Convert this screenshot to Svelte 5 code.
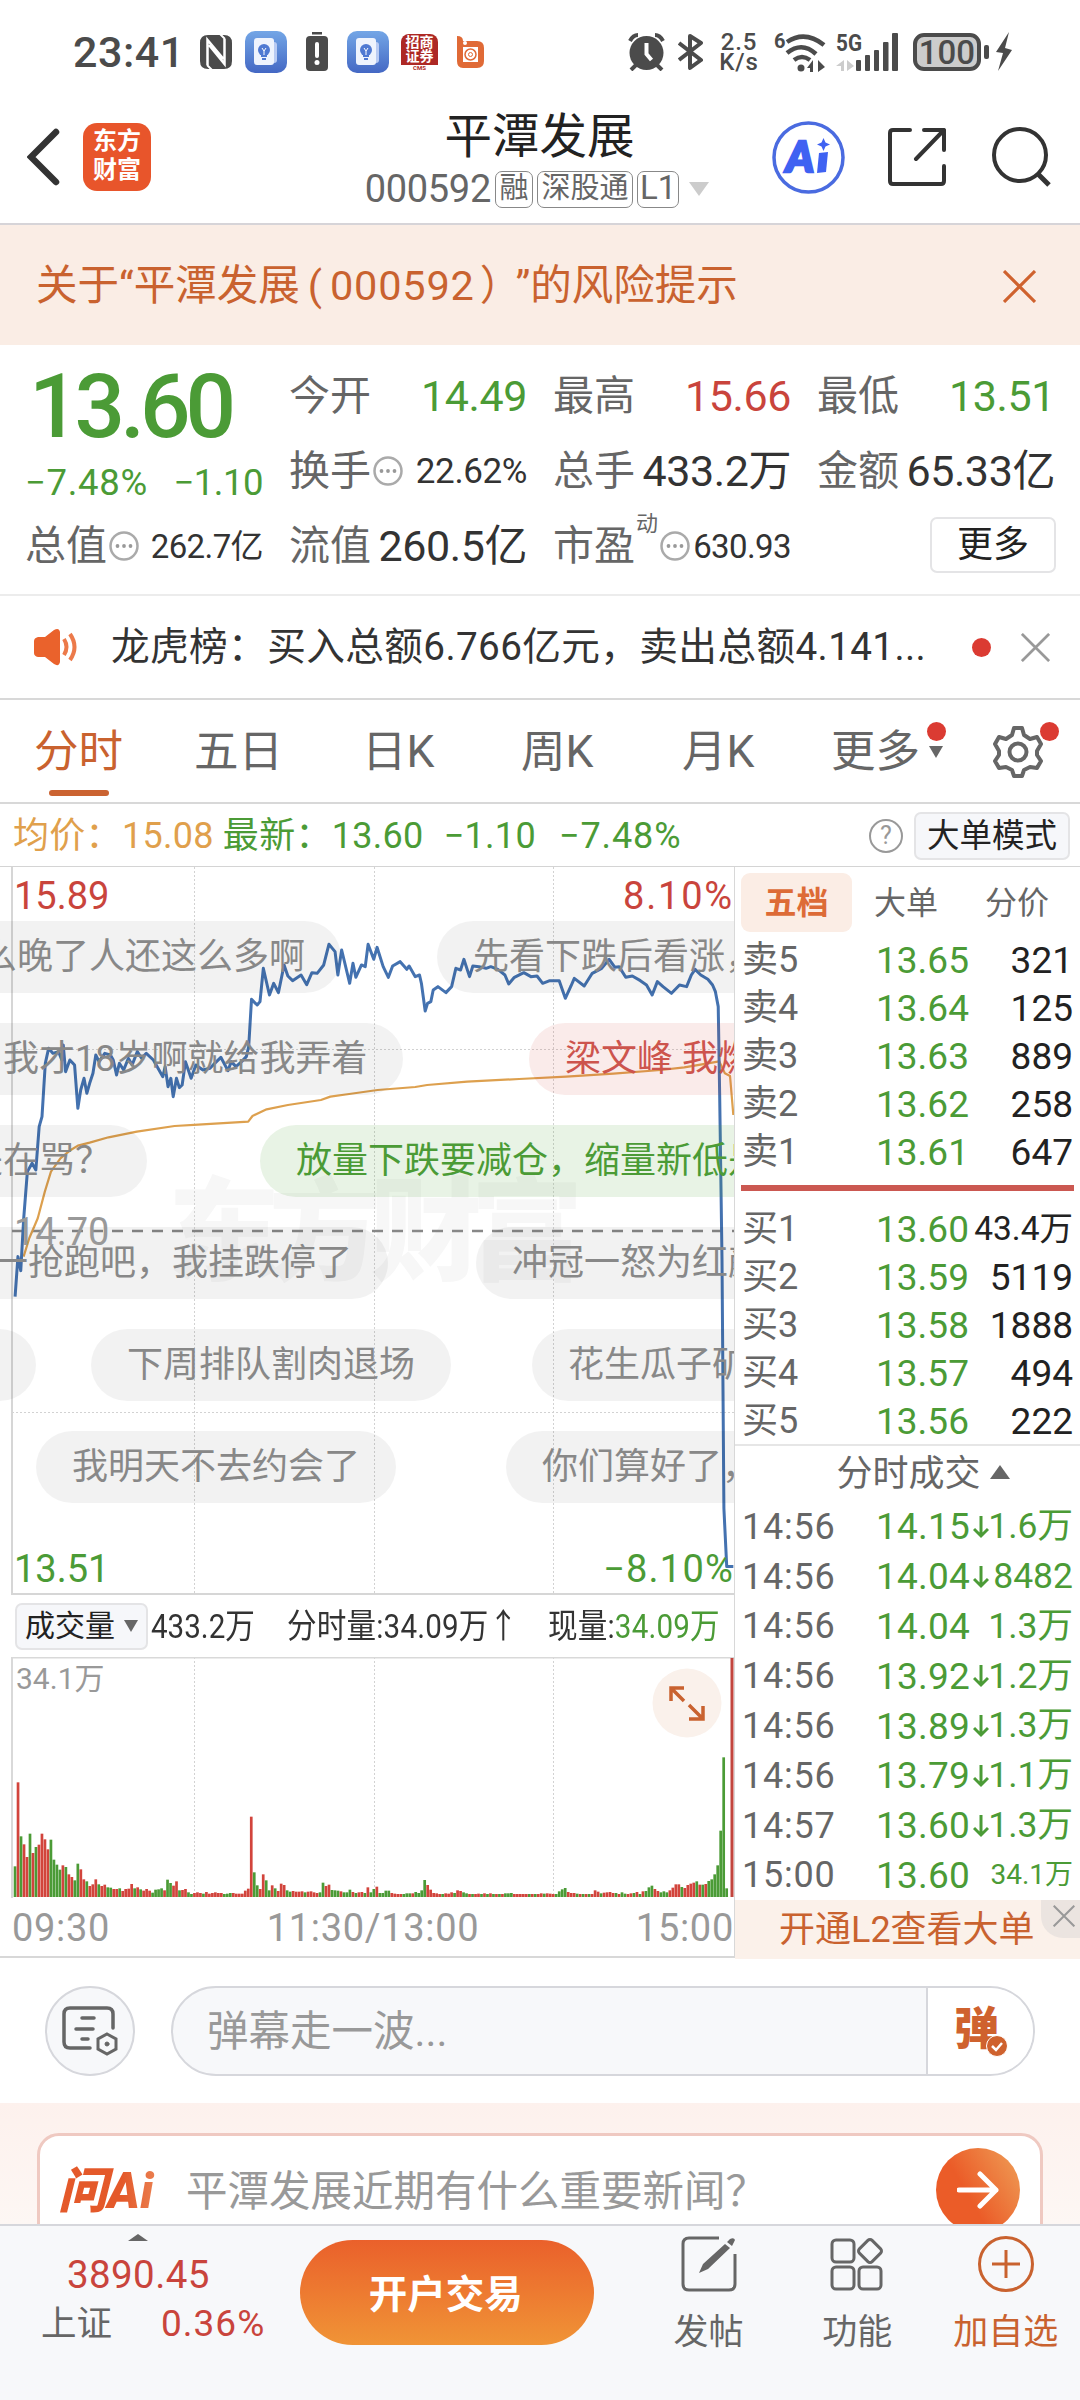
<script>
	const stats = [
		{ label: '今开', value: '14.49', tone: 'down' },
		{ label: '最高', value: '15.66', tone: 'up' },
		{ label: '最低', value: '13.51', tone: 'down' },
		{ label: '换手', value: '22.62%', info: true },
		{ label: '总手', value: '433.2万' },
		{ label: '金额', value: '65.33亿' },
	];
	const valuations = [
		{ label: '总值', value: '262.7亿', info: true },
		{ label: '流值', value: '260.5亿' },
		{ label: '市盈', sup: '动', value: '630.93', info: true },
	];

	const asks = [['卖5', '13.65', '321'], ['卖4', '13.64', '125'], ['卖3', '13.63', '889'], ['卖2', '13.62', '258'], ['卖1', '13.61', '647']];
	const bids = [['买1', '13.60', '43.4万'], ['买2', '13.59', '5119'], ['买3', '13.58', '1888'], ['买4', '13.57', '494'], ['买5', '13.56', '222']];
	const trades = [
		['14:56', '14.15', true, '1.6万'],
		['14:56', '14.04', true, '8482'],
		['14:56', '14.04', false, '1.3万'],
		['14:56', '13.92', true, '1.2万'],
		['14:56', '13.89', true, '1.3万'],
		['14:56', '13.79', true, '1.1万'],
		['14:57', '13.60', true, '1.3万'],
		['15:00', '13.60', false, '34.1万'],
	];

	// floating comments, x is where the bubble starts in the chart
	const bullets = [
		{ x: -55, row: 0, text: '么晚了人还这么多啊' },
		{ x: 437, row: 0, text: '先看下跌后看涨，' },
		{ x: -33, row: 1, text: '我才18岁啊就给我弄着' },
		{ x: 529, row: 1, text: '梁文峰 我燃', tone: 'red' },
		{ x: -69, row: 2, text: '是在骂？' },
		{ x: 260, row: 2, text: '放量下跌要减仓，缩量新低是', tone: 'green' },
		{ x: -44, row: 3, text: '一抢跑吧，我挂跌停了' },
		{ x: 476, row: 3, text: '冲冠一怒为红颜' },
		{ x: -72, row: 4, text: '了' },
		{ x: 91, row: 4, text: '下周排队割肉退场' },
		{ x: 532, row: 4, text: '花生瓜子矿' },
		{ x: 36, row: 5, text: '我明天不去约会了' },
		{ x: 506, row: 5, text: '你们算好了，' },
	];

	const pricePoints = '32,1310 38,1190 44,1232 50,1080 58,935 68,910 76,930 83,800 89,770 96,610 103,565 112,580 124,575 131,600 134,555 139,635 148,600 158,615 165,745 171,690 178,655 184,700 190,670 197,640 203,585 210,605 222,580 234,585 240,600 247,645 253,610 262,630 272,595 280,615 291,575 300,595 310,580 325,600 345,650 350,620 356,680 362,655 367,710 374,655 380,683 386,675 393,605 405,655 415,615 430,630 445,625 455,610 468,592 483,632 490,605 500,620 512,605 522,590 527,560 533,418 545,435 551,425 558,325 571,405 580,370 590,398 602,315 610,348 620,362 638,345 650,374 661,338 672,340 686,315 697,253 710,275 716,345 724,270 741,370 748,310 754,352 766,315 774,320 780,253 792,298 799,262 812,320 823,352 832,318 848,305 862,328 867,318 880,350 889,345 893,370 901,453 906,430 913,425 918,390 928,380 945,398 957,380 966,325 976,330 983,298 995,350 1002,318 1015,320 1030,325 1040,320 1055,328 1070,345 1078,372 1090,352 1110,338 1125,350 1138,348 1150,370 1165,362 1185,362 1198,415 1210,378 1217,355 1238,378 1255,340 1275,325 1291,298 1303,322 1312,320 1326,352 1340,348 1357,362 1370,375 1382,405 1393,365 1405,380 1423,400 1440,375 1455,380 1465,345 1473,328 1485,345 1500,358 1510,375 1516,395 1522,440 1525,700 1530,1200 1534,1945 1540,2120 1554,2120';
	const averagePoints = '50,1190 62,1135 80,1075 95,995 108,935 128,895 150,870 165,857 190,848 230,832 290,815 370,798 420,794 526,785 535,768 565,748 610,735 680,720 700,710 740,702 800,690 880,681 905,675 990,665 1100,657 1200,650 1300,641 1400,630 1450,622 1500,610 1524,604 1536,640 1547,648 1554,765';

	// one entry per minute, negative means the price fell
	const volumes = [
		-92, 344, -182, 158, 120, -190, 132, -150, 157, 190, 173, 143, -172, -112, -97, -82, 95, -90, 68, 60,
		-50, -100, 83, 53, -47, 33, 38, 53, -38, 33, 37, -29, -28, 24, 24, -26, 18, 24, 25, 39,
		-26, 29, -23, 19, 24, 19, -13, -22, -23, -26, 20, -52, -42, 34, 47, -20, 21, 24, -14, -9,
		12, 14, 12, -10, 15, 10, 12, 14, 12, 12, -9, -10, -12, 12, 10, 10, 10, 19, 25, 241,
		-74, -35, 24, 68, -50, -20, 35, -26, 18, 40, 36, -20, -16, 18, 16, 16, 17, -14, 16, 17,
		14, 12, -14, -43, 33, 37, -21, -20, -19, 17, -14, -14, -22, 15, -12, 14, 15, -12, 29, -14,
		-24, 31, -12, -12, -19, -19, 12, 10, 9, 9, -9, -11, -11, 11, -15, -12, -20, -51, 36, 22,
		12, 11, 9, -9, 11, 10, 14, -12, 20, 18, -14, -11, 9, -9, 9, 10, -9, 11, -9, 11,
		-9, 9, -9, 9, -11, -11, -12, 9, 9, 9, 9, 9, -9, 9, -9, 9, 11, -10, 11, 10,
		9, -9, -17, -23, -27, 15, 12, 12, -10, 9, -9, 9, -9, 9, 20, 16, -11, 13, 14, 15,
		12, -12, 9, -14, -10, 9, 11, -12, 15, -9, 17, -18, -29, -34, 24, 18, -14, -17, -14, 20,
		28, 38, 38, -30, 27, 36, 40, 43, -47, 37, -37, 39, -48, -53, -68, -95, -199, -419, -26, 0,
	];
</script>

<svelte:head>
	<title>平潭发展</title>
</svelte:head>

{#snippet cross(size, color)}
	<svg width={size} height={size} viewBox="0 0 32 32" fill="none" stroke={color} stroke-width="3">
		<path d="M1 1 31 31M31 1 1 31" />
	</svg>
{/snippet}

{#snippet info()}
	<svg class="info" width="30" height="30" viewBox="0 0 30 30" fill="#999">
		<circle cx="15" cy="15" r="13.500" fill="none" stroke="#aaa" stroke-width="2.500" />
		<circle cx="8.500" cy="15" r="1.900" /><circle cx="15" cy="15" r="1.900" /><circle cx="21.500" cy="15" r="1.900" />
	</svg>
{/snippet}

{#snippet tipIcon()}
	<svg width="42" height="42" viewBox="0 0 42 42">
		<rect width="42" height="42" rx="10" fill="url(#tipFill)" />
		<rect x="26" y="11" width="6" height="21" rx="3" fill="#b9cbf3" />
		<rect x="9" y="7" width="20" height="27" rx="3" fill="#eef3fd" />
		<circle cx="19" cy="19" r="6" fill="#4f79d2" />
		<path d="M16 24h6v2h-6zM17 27h4v2h-4z" fill="#4f79d2" />
		<path d="m17 17 2 3 2-3M19 20v4" stroke="#fff" fill="none" />
	</svg>
{/snippet}

<div class="screen">
	<div class="status">
		<span class="clock">23:41</span>
		<div class="left-icons">
			<svg width="34" height="36" viewBox="0 0 34 36">
				<path d="M9 1h11v34H9q-8 0-8-8V9q0-8 8-8zM14 1h11q8 0 8 8v18q0 8-8 8H14z" fill="#4b4b4b" />
				<path d="M8.500 31V6l16 19M25.500 5v25L10 11" fill="none" stroke="#fff" stroke-width="2.500" />
				<path d="M21 0l5 5M8 31l5 5" stroke="#fff" stroke-width="2" />
			</svg>
			<svg class="defs" width="0" height="0">
				<linearGradient id="tipFill" x2="0" y2="1">
					<stop stop-color="#73a6e6" /><stop offset="1" stop-color="#4468c4" />
				</linearGradient>
			</svg>
			{@render tipIcon()}
			<svg class="alert" width="22" height="40" viewBox="0 0 22 40">
				<path d="M6 0h10v2.500H6z" fill="#4b4b4b" />
				<rect y="4" width="22" height="35" rx="4" fill="#4b4b4b" />
				<path d="M11 12v12" stroke="#fff" stroke-width="4" stroke-linecap="round" />
				<circle cx="11" cy="30.500" r="2.500" fill="#fff" />
			</svg>
			{@render tipIcon()}
			<div class="broker"><div>招商<br />证券</div><em>CMS</em></div>
			<svg width="27" height="32" viewBox="0 0 27 32">
				<path d="M0 0q6 0 6 5h14q7 0 7 7v13q0 7-7 7H6q-6 0-6-7z" fill="#e06a36" />
				<rect x="6" y="11" width="15" height="15" fill="#fff" />
				<circle cx="8" cy="7" r="2" fill="#fff" />
				<circle cx="13.500" cy="18.500" r="5.500" fill="none" stroke="#e06a36" stroke-width="1.500" />
				<circle cx="13.500" cy="18.500" r="2" fill="none" stroke="#e06a36" />
			</svg>
		</div>
		<div class="right-icons">
			<svg width="37" height="38" viewBox="0 0 37 38" fill="none" stroke="#4b4b4b">
				<circle cx="18.500" cy="20" r="17" fill="#4b4b4b" stroke="none" />
				<path d="M2 8q3-6 8-6M35 8q-3-6-8-6" stroke-width="4" />
				<path d="M8 32 3 37M29 32l5 5" stroke-width="4" />
				<path d="M18.500 10v11l5 6" stroke="#fff" stroke-width="4" />
			</svg>
			<svg class="bt" width="26" height="38" viewBox="0 0 26 38" fill="none" stroke="#4b4b4b" stroke-width="4" stroke-linejoin="round">
				<path d="M1 10 23 27 12 35V3l11 7L1 27" />
			</svg>
			<div class="rate">2.5<br />K/s</div>
			<svg class="wifi" width="52" height="40" viewBox="0 0 52 40" fill="none" stroke="#4b4b4b" stroke-width="4.500">
				<text x="0" y="16" font-size="20" font-weight="700" fill="#4b4b4b" stroke="none">6</text>
				<path d="M13 10q18-12 37 3M13 21q15-12 29 1M20 28q8-6 16 0" />
				<circle cx="27" cy="36" r="3.500" fill="#4b4b4b" stroke="none" />
				<path d="M39 28v12h-3v-4h-3zM44 28v12l7-5z" fill="#4b4b4b" stroke="none" />
			</svg>
			<svg class="cell" width="64" height="40" viewBox="0 0 64 40" fill="#4b4b4b">
				<text x="0" y="19" font-size="23" font-weight="700" textLength="26" lengthAdjust="spacingAndGlyphs">5G</text>
				<path d="M8 28v11H5v-5H0zM11 28v11l7-5z" fill="#ccc" />
				<rect x="20" y="28" width="5" height="11" rx="1" /><rect x="29" y="23" width="5" height="16" rx="1" />
				<rect x="38" y="18" width="5" height="21" rx="1" /><rect x="47" y="10" width="5.500" height="29" rx="1" />
				<rect x="56" y="1" width="6" height="38" rx="1" />
			</svg>
			<div class="battery">100</div>
			<i class="nub"></i>
			<svg width="18" height="40" viewBox="0 0 18 40"><path d="M14 0 1 20l7 1L3 39 17 18l-7-2z" fill="#4b4b4b" /></svg>
		</div>
	</div>

	<header>
		<svg class="back" width="34" height="58" viewBox="0 0 34 58" fill="none" stroke="#333" stroke-width="6.500" stroke-linecap="round">
			<path d="M29 4 4 29l25 25" />
		</svg>
		<div class="logo">东方<br />财富</div>
		<div class="title">
			<h1>平潭发展</h1>
			<div class="code">
				<span>000592</span><b>融</b><b>深股通</b><b>L1</b><i></i>
			</div>
		</div>
		<svg width="73" height="73" viewBox="0 0 73 73">
			<circle cx="36.500" cy="36.500" r="34.500" fill="none" stroke="#4a6be0" stroke-width="3.500" />
			<text class="ai" x="14" y="51" font-size="42" textLength="28" lengthAdjust="spacingAndGlyphs">A</text>
			<path d="m47 32 9-1-2 20-9 1z" fill="#3f62f2" />
			<path d="m51.500 17 2 4.500 4.500 2-4.500 2-2 4.500-2-4.500-4.500-2 4.500-2z" fill="#3f62f2" />
		</svg>
		<svg class="share" width="58" height="58" viewBox="0 0 58 58" fill="none" stroke="#333" stroke-width="4" stroke-linecap="round" stroke-linejoin="round">
			<path d="M22 2H5Q2 2 2 5v48q0 3 3 3h48q3 0 3-3V38M36 2h20v20M56 2 28 31" />
		</svg>
		<svg class="search" width="60" height="60" viewBox="0 0 60 60" fill="none" stroke="#333" stroke-width="4">
			<circle cx="28" cy="28" r="26" /><path d="m46 47 11 11" stroke-width="5" />
		</svg>
	</header>

	<div class="notice">
		<span>关于“平潭发展<b class="open">(</b><b class="num">000592</b><b class="close">）</b>”的风险提示</span>
		{@render cross(33, '#cf622e')}
	</div>

	<section class="quote">
		<div class="top">
			<div class="last">
				<strong>13.60</strong>
				<p><span>−7.48%</span><span>−1.10</span></p>
			</div>
			<div class="stats">
				{#each stats as s}
					<div class="stat {s.tone}">
						<label>{s.label}</label>
						{#if s.info}{@render info()}{/if}
						<span class:small={s.info}>{s.value}</span>
					</div>
				{/each}
			</div>
		</div>
		<div class="bottom">
			{#each valuations as s}
				<div class="stat">
					<label>{s.label}</label>
					{#if s.sup}<sup>{s.sup}</sup>{/if}
					{#if s.info}{@render info()}{/if}
					<span class:small={s.info}>{s.value}</span>
				</div>
			{/each}
			<button>更多</button>
		</div>
	</section>

	<div class="ticker">
		<svg width="45" height="38" viewBox="0 0 45 38">
			<path d="M0 13q0-3 4-4h7L20 2q5-3 6 2v30q-1 5-6 2l-9-7H4q-4-1-4-4z" fill="#ea622c" />
			<path d="M30 11q5 8 0 16M36 6q9 13 0 26" fill="none" stroke="#ec7a4a" stroke-width="4" />
		</svg>
		<span>龙虎榜：买入总额6.766亿元，卖出总额4.141...</span>
		<i class="dot"></i>
		{@render cross(29, '#999')}
	</div>

	<nav>
		<span class="active">分时</span>
		<span>五日</span>
		<span>日K</span>
		<span>周K</span>
		<span>月K</span>
		<span class="more">更多<i class="caret"></i><i class="dot"></i></span>
		<div class="gear">
			<svg width="52" height="52" viewBox="0 0 52 52" fill="none" stroke="#666" stroke-width="4" stroke-linejoin="round">
				<path d="M22 2h8l2 7 6 4 7-2 4 7-4 7v4l4 6-4 7-7-1-6 3-2 6h-8l-2-6-6-3-7 1-4-7 4-6v-4l-4-7 4-7 7 2 6-4z" />
				<circle cx="26" cy="26" r="8.500" />
			</svg>
			<i class="dot"></i>
		</div>
	</nav>

	<div class="summary">
		<span class="avg">均价：15.08</span>
		<span class="now">最新：13.60</span>
		<span class="now">−1.10</span>
		<span class="now">−7.48%</span>
		<i class="help">?</i>
		<button>大单模式</button>
	</div>

	<main>
		<div class="left">
			<div class="chart">
				<svg width="735" height="728" viewBox="0 0 735 728" fill="none">
					<text class="mark" x="168" y="405" textLength="415">东方财富</text>
					<path d="M194.500 0v727M374.500 0v727M553.500 0v727M12 182.500h722M12 545.500h722" stroke="#d2d2d2" stroke-dasharray="2 2" />
					<path d="M12 0v727h722" stroke="#d6d6d6" stroke-width="2" />
					<path d="M12 364h722" stroke="#888" stroke-width="2.500" stroke-dasharray="11 9" />
					<g transform="translate(0 -7) scale(.4719 .3333)" stroke-linejoin="round">
						<polyline points={averagePoints} stroke="#dda04e" stroke-width="2.200" vector-effect="non-scaling-stroke" />
						<polyline points={pricePoints} stroke="#4472b0" stroke-width="3" vector-effect="non-scaling-stroke" />
					</g>
				</svg>
				{#each bullets as b}
					<span class="bullet {b.tone}" style="left: {b.x}px; top: {54 + b.row * 102}px">{b.text}</span>
				{/each}
				<span class="scale tl">15.89</span>
				<span class="scale tr">8.10%</span>
				<span class="scale ml">14.70</span>
				<span class="scale bl">13.51</span>
				<span class="scale br">−8.10%</span>
			</div>
			<div class="volume-head">
				<button>成交量<i class="caret"></i></button>
				<span class="total">433.2万</span>
				<span class="minute">分时量:34.09万↑</span>
				<span class="current">现量:<em>34.09万</em></span>
			</div>
			<div class="volume">
				<svg width="735" height="241" viewBox="0 0 735 241">
					<path d="M194.500 0v240M374.500 0v240M553.500 0v240" stroke="#d2d2d2" stroke-dasharray="2 2" />
					<path d="M12 241V.500h722" fill="none" stroke="#d9d9d9" stroke-width="2" />
					{#each volumes as v, i}
						<rect x={13.7 + i * 2.99} y={240 - Math.abs(v) / 3} width="2.700" height={Math.abs(v) / 3} fill={v < 0 ? '#4b9b36' : '#d2443c'} />
					{/each}
					<rect x="730.500" y="1" width="3" height="239" fill="#c2453e" />
					<circle cx="687" cy="46" r="34.500" fill="#faf1eb" />
					<path d="M671 44V31h13M672 32l12 12M703 49v13h-14M702 61l-13-13" fill="none" stroke="#c9622f" stroke-width="3.500" />
				</svg>
				<span>34.1万</span>
			</div>
			<div class="axis"><span>09:30</span><span>11:30/13:00</span><span>15:00</span></div>
		</div>

		<aside>
			<div class="tabs"><b>五档</b><span>大单</span><span>分价</span></div>
			<div class="book">
				{#each asks as [name, price, count]}
					<p><span>{name}</span><em>{price}</em><strong>{count}</strong></p>
				{/each}
			</div>
			<div class="ratio"></div>
			<div class="book">
				{#each bids as [name, price, count]}
					<p><span>{name}</span><em>{price}</em><strong class:wide={count.endsWith('万')}>{count}</strong></p>
				{/each}
			</div>
			<div class="trades-head">分时成交<i></i></div>
			<div class="trades">
				{#each trades as [time, price, fell, count]}
					<p>
						<span>{time}</span><em>{price}</em>
						{#if fell}
							<svg width="16" height="24" viewBox="0 0 16 24" fill="none" stroke="#4b9b36" stroke-width="3"><path d="M8 1v20M1 14l7 7 7-7" /></svg>
						{/if}
						<strong class:tiny={count === '34.1万'}>{count}</strong>
					</p>
				{/each}
			</div>
			<div class="promo">开通L2查看大单<i>{@render cross(22, '#999')}</i></div>
		</aside>
	</main>

	<div class="compose">
		<div class="round">
			<svg width="56" height="50" viewBox="0 0 56 50" fill="none" stroke="#666" stroke-width="3.500" stroke-linecap="round">
				<path d="M51 22V8q0-6-6-6H8Q2 2 2 8v28q0 6 6 6h20M20 12h12M14 23h17M20 33h6" />
				<path d="m45 28 9 5v10l-9 5-9-5V33z" stroke-width="3" />
				<circle cx="45" cy="38" r="2" fill="#666" stroke-width="1" />
			</svg>
		</div>
		<div class="input">
			<span>弹幕走一波...</span>
			<div class="toggle">
				弹
				<svg width="22" height="22" viewBox="0 0 22 22"><circle cx="11" cy="11" r="10.500" fill="#cf622e" stroke="#fff" /><path d="m6 11 4 4 6-7" fill="none" stroke="#fff" stroke-width="2.500" /></svg>
			</div>
		</div>
	</div>

	<div class="assistant">
		<div class="card">
			<div class="ask">问Ai</div>
			<span>平潭发展近期有什么重要新闻？</span>
			<div class="go">
				<svg width="42" height="38" viewBox="0 0 42 38" fill="none" stroke="#fff" stroke-width="5" stroke-linecap="round" stroke-linejoin="round"><path d="M2 19h37M23 3l16 16-16 16" /></svg>
			</div>
		</div>
	</div>

	<footer>
		<div class="index">
			<i></i>
			<strong>3890.45</strong>
			<p><span>上证</span><em>0.36%</em></p>
		</div>
		<button>开户交易</button>
		<div class="action">
			<svg width="56" height="56" viewBox="0 0 56 56" fill="none" stroke="#666" stroke-width="3">
				<path d="M38 2H8Q2 2 2 8v40q0 6 6 6h40q6 0 6-6V18" />
				<path d="M49 3q4-2 5 1l-3 6-5-4zM44 8l5 4-22 21-9 4 4-9z" fill="#666" stroke="none" />
			</svg>
			发帖
		</div>
		<div class="action">
			<svg width="54" height="54" viewBox="0 0 54 54" fill="none" stroke="#666" stroke-width="3">
				<rect x="2" y="3" width="22" height="22" rx="4" /><rect x="2" y="30" width="22" height="22" rx="4" /><rect x="29" y="30" width="22" height="22" rx="4" />
				<rect x="31" y="5" width="18" height="18" rx="3" transform="rotate(45 40 14)" />
			</svg>
			功能
		</div>
		<div class="action add">
			<svg width="58" height="58" viewBox="0 0 58 58" fill="none" stroke="#c9622f" stroke-width="3"><circle cx="29" cy="29" r="26.500" /><path d="M15 29h28M29 15v28" /></svg>
			加自选
		</div>
	</footer>
</div>

<style>
	:global(body) {
		background: #fff;
	}
	.screen {
		width: 1080px;
		height: 2400px;
		overflow: hidden;
		display: flex;
		flex-direction: column;
		font-family: Roboto, "Noto Sans CJK SC", sans-serif;
		color: #666;
		line-height: 1;
	}
	.screen > * {
		flex: none;
	}
	* {
		box-sizing: border-box;
	}
	p, h1 {
		margin: 0;
		font-weight: 400;
	}
	em, i {
		font-style: normal;
	}
	svg {
		flex: none;
		display: block;
	}
	button {
		font-family: inherit;
		border: 2px solid #e4e4e6;
		padding: 0;
		color: #222;
	}
	span, strong, label, button {
		white-space: nowrap;
	}

	.status {
		height: 104px;
		padding: 0 67px 0 73px;
		display: flex;
		align-items: center;
		color: #4b4b4b;
	}
	.clock {
		font-size: 43px;
		font-weight: 500;
		width: 126px;
		letter-spacing: .5px;
	}
	.left-icons, .right-icons {
		display: flex;
		align-items: center;
	}
	.left-icons {
		gap: 12px;
	}
	.defs {
		margin-right: -12px;
	}
	.alert {
		margin: 0 7px;
	}
	.broker {
		text-align: center;
		width: 37px;
		height: 37px;
		font-size: 14px;
		font-weight: 700;
		line-height: 14px;
		color: #fff;
	}
	.broker div {
		background: #ad2824;
		border-radius: 8px 8px 0 0;
		height: 31px;
		padding-top: 1px;
	}
	.broker em {
		display: block;
		font-size: 6px;
		line-height: 6px;
		color: #ad2824;
	}
	.broker + svg {
		margin-left: 7px;
	}
	.right-icons {
		margin-left: auto;
	}
	.bt {
		margin-left: 13px;
	}
	.rate {
		font-size: 24px;
		line-height: 20px;
		font-weight: 500;
		text-align: center;
		width: 44px;
		margin-left: 13px;
		letter-spacing: .8px;
	}
	.wifi {
		margin-left: 13px;
	}
	.cell {
		margin-left: 10px;
	}
	.battery {
		width: 68px;
		height: 38px;
		border: 4px solid #4b4b4b;
		border-radius: 11px;
		background: #ccc;
		font-size: 33px;
		line-height: 31px;
		font-weight: 500;
		text-align: center;
		margin-left: 13px;
	}
	.nub {
		width: 5px;
		height: 14px;
		border-radius: 2px;
		background: #4b4b4b;
		margin: 0 6px 0 3px;
	}

	header {
		height: 121px;
		border-bottom: 2px solid #d6d4d8;
		padding: 0 28px 13px 27px;
		display: flex;
		align-items: center;
	}
	.logo {
		width: 68px;
		height: 68px;
		margin-left: 22px;
		background: #e8552b;
		border-radius: 14px;
		color: #fff;
		font-size: 24px;
		line-height: 29px;
		font-weight: 700;
		text-align: center;
		padding-top: 4px;
	}
	.title {
		flex: 1;
		display: flex;
		flex-direction: column;
		align-items: center;
		padding-left: 151px;
	}
	h1 {
		font-size: 47.5px;
		line-height: 54px;
		color: #222;
		padding-left: 5px;
		margin-top: 5px;
	}
	.code {
		display: flex;
		align-items: center;
		gap: 4px;
		font-size: 38px;
		height: 40px;
		margin-top: 5px;
	}
	.code span {
		letter-spacing: -.3px;
	}
	.code b {
		font-weight: 400;
		font-size: 29px;
		line-height: 32px;
		height: 37px;
		border: 1.5px solid #888;
		border-radius: 7px;
		padding: 0 3.5px;
	}
	.code b:nth-of-type(3) {
		font-size: 33px;
		padding: 0 2px;
	}
	.code i {
		border: 10px solid transparent;
		border-top: 14px solid #ccc;
		border-bottom: 0;
		margin-left: 6px;
	}
	.ai {
		font-family: Lato, sans-serif;
		font-weight: 900;
		font-style: italic;
		fill: #3f62f2;
		stroke: #3f62f2;
		stroke-width: 2.5px;
	}
	.share {
		margin-left: 43px;
	}
	.search {
		margin-left: 46px;
	}

	.notice {
		height: 120px;
		background: #faede5;
		color: #c9622f;
		display: flex;
		align-items: center;
		justify-content: space-between;
		padding: 2px 44px 0 36px;
		font-size: 41.5px;
	}
	.notice b {
		font-weight: 400;
	}
	.open {
		padding: 0 8px;
	}
	.num {
		letter-spacing: .8px;
	}
	.close {
		padding-left: 5px;
		margin-right: 15px;
	}

	.quote {
		height: 249px;
		padding: 22px 25px 0;
	}
	.top {
		display: flex;
		gap: 26px;
	}
	.last {
		width: 238px;
		color: #4b9b36;
	}
	.last strong {
		display: block;
		font-size: 89px;
		line-height: 80px;
		height: 94px;
		font-weight: 500;
		letter-spacing: -5px;
		padding-left: 4px;
	}
	.last p {
		display: flex;
		justify-content: space-between;
		font-size: 36.5px;
		letter-spacing: -.5px;
		line-height: 44px;
	}
	.last span:first-child {
		letter-spacing: .7px;
	}
	.stats, .bottom {
		display: grid;
		grid-template-columns: repeat(3, 238px);
		grid-auto-rows: 75px;
		column-gap: 26px;
	}
	.bottom {
		grid-template-columns: repeat(4, 238px);
	}
	.stat {
		height: 58px;
		display: flex;
		align-items: center;
		font-size: 41px;
	}
	.stat span {
		margin-left: auto;
		color: #333;
		font-size: 43px;
		letter-spacing: -.4px;
	}
	.stat span.small {
		font-size: 35px;
	}
	.bottom .stat span.small {
		font-size: 33px;
		letter-spacing: -.6px;
	}
	.bottom sup ~ span.small {
		letter-spacing: -1.3px;
	}
	.stat.down span {
		color: #4b9b36;
	}
	.stat.up span {
		color: #c9443c;
	}
	.info {
		margin-left: 2px;
	}
	sup {
		font-size: 22px;
		align-self: flex-start;
		margin: -4px 0 0 1px;
	}
	.bottom button {
		justify-self: end;
		margin-right: -1px;
		width: 126px;
		height: 56px;
		background: #fff;
		border-radius: 7px;
		font-size: 36px;
		line-height: 48px;
	}

	.ticker {
		height: 106px;
		border-top: 2px solid #ececec;
		border-bottom: 2px solid #d8d8d8;
		display: flex;
		align-items: center;
		padding: 0 30px 0 34px;
		font-size: 38.7px;
		color: #333;
	}
	.ticker span {
		width: 820px;
		margin-left: 32px;
		letter-spacing: .35px;
	}
	.dot {
		width: 19px;
		height: 19px;
		border-radius: 50%;
		background: #db3b32;
	}
	.ticker .dot {
		margin: 0 30px 0 auto;
	}

	nav {
		height: 104px;
		border-bottom: 2px solid #d8d8d8;
		display: grid;
		grid-template-columns: 160px 168px 159px 161px 149px 1fr auto;
		align-items: center;
		padding: 0 36px 0 34px;
		font-size: 44.5px;
	}
	nav span {
		line-height: 104px;
	}
	nav .active {
		color: #c9622f;
		position: relative;
	}
	.active::after {
		content: "";
		position: absolute;
		left: 15px;
		bottom: 8px;
		width: 60px;
		height: 6px;
		border-radius: 3px;
		background: #cb6331;
	}
	.more, .gear {
		position: relative;
	}
	.more {
		justify-self: start;
	}
	.caret {
		display: inline-block;
		border: 7px solid transparent;
		border-top: 12px solid #666;
		border-bottom: 0;
		margin-left: 9px;
	}
	nav .caret {
		margin-bottom: 9px;
	}
	.more .dot {
		position: absolute;
		right: -3px;
		top: 22px;
	}
	.gear .dot {
		position: absolute;
		left: 48px;
		top: -4px;
	}

	.summary {
		height: 62px;
		display: flex;
		align-items: center;
		padding: 1px 10px 0 13px;
		font-size: 36px;
		letter-spacing: .3px;
	}
	.avg {
		color: #e0a04c;
	}
	.avg, .now {
		margin-right: 9px;
	}
	.now {
		color: #4b9b36;
	}
	.now + .now {
		margin: 0 12px 0 11px;
	}
	.now:nth-child(4) {
		letter-spacing: .9px;
	}
	.help {
		width: 34px;
		height: 34px;
		border: 2.5px solid #999;
		border-radius: 50%;
		font-size: 25px;
		line-height: 29px;
		text-align: center;
		color: #999;
		margin-left: auto;
	}
	.summary button {
		width: 156px;
		height: 48px;
		margin-left: 11px;
		font-size: 32.5px;
		line-height: 42px;
		background: #f6f7fa;
		border-radius: 7px;
	}

	main {
		height: 1092px;
		border-top: 1.5px solid #d4d4d4;
		border-bottom: 2px solid #d8d8d8;
		display: flex;
	}
	.left {
		flex: none;
		width: 735px;
		border-right: 1.5px solid #d8d8d8;
	}
	.chart {
		position: relative;
		height: 728px;
		overflow: hidden;
	}
	.mark {
		font-size: 112px;
		font-weight: 900;
		fill: #f7f7f7;
	}
	.bullet {
		position: absolute;
		height: 72px;
		line-height: 73px;
		padding: 0 36px;
		border-radius: 36px;
		font-size: 36px;
		color: #888;
		background: rgba(0, 0, 0, .05);
	}
	.bullet.red {
		color: #cd544d;
		background: rgba(210, 60, 50, .1);
	}
	.bullet.green {
		color: #4b9b36;
		background: rgba(75, 165, 55, .13);
	}
	.scale {
		position: absolute;
		left: 14px;
		font-size: 38px;
		line-height: 40px;
	}
	.tl {
		top: 9px;
		color: #c9443c;
	}
	.tr {
		top: 9px;
		left: auto;
		right: 0;
		color: #c9443c;
		letter-spacing: 1.8px;
	}
	.ml {
		top: 345px;
		color: #999;
	}
	.bl {
		top: 682px;
		color: #4b9b36;
	}
	.br {
		top: 682px;
		left: auto;
		right: 0;
		color: #4b9b36;
		letter-spacing: 1.2px;
	}
	.volume-head {
		height: 62px;
		display: flex;
		align-items: center;
		padding-left: 15px;
		font-size: 34px;
		color: #333;
	}
	.volume-head button {
		width: 133px;
		height: 47px;
		background: #f6f7fa;
		border-radius: 7px;
		font-size: 30px;
		line-height: 40px;
		display: flex;
		align-items: center;
		justify-content: center;
	}
	.volume-head span {
		transform: scaleX(.87);
		transform-origin: 0 50%;
		flex: none;
	}
	.total {
		width: 136px;
		margin-left: 3px;
	}
	.minute {
		width: 261px;
		letter-spacing: .2px;
	}
	.current {
		width: 170px;
		letter-spacing: .2px;
	}
	.current em {
		color: #4b9b36;
	}
	.volume {
		position: relative;
		height: 241px;
	}
	.volume span {
		position: absolute;
		left: 16px;
		top: 7px;
		font-size: 30px;
		color: #999;
	}
	.axis {
		display: flex;
		justify-content: space-between;
		padding: 11px 0 0 12px;
		font-size: 38px;
		color: #999;
		letter-spacing: .7px;
	}

	aside {
		flex: 1;
		min-width: 0;
	}
	.tabs {
		height: 69px;
		display: flex;
		align-items: center;
		padding: 2px 0 0 6px;
		font-size: 32px;
		line-height: 60px;
	}
	.tabs b {
		width: 111px;
		height: 59px;
		border-radius: 9px;
		background: #fbede5;
		color: #dd6b37;
		text-align: center;
		margin-right: 22px;
	}
	.tabs span + span {
		margin-left: 47px;
	}
	.book p, .trades p {
		height: 48px;
		display: flex;
		align-items: center;
		padding: 0 7px 0 7px;
		font-size: 36px;
	}
	.book span, .trades span {
		width: 134px;
		font-size: 36px;
	}
	.trades span {
		letter-spacing: .8px;
	}
	.book strong, .trades strong {
		margin-left: auto;
		font-weight: 400;
		color: #222;
		font-size: 37px;
	}
	.book strong.wide {
		font-size: 33.5px;
	}
	.book em, .trades em {
		color: #4b9b36;
		font-size: 37px;
	}
	.ratio {
		height: 6px;
		margin: 9px 6px 14px;
		background: #cb5851;
	}
	.trades-head {
		height: 58px;
		margin-top: -1px;
		border-top: 2px solid #e6e6e6;
		display: flex;
		align-items: center;
		justify-content: center;
		padding-left: 31px;
		font-size: 36px;
	}
	.trades-head i {
		border: 10px solid transparent;
		border-bottom: 14px solid #666;
		border-top: 0;
		margin: 0 0 5px 9px;
	}
	.trades p {
		height: 49.8px;
	}
	.trades em {
		letter-spacing: .2px;
	}
	.trades strong {
		color: #4b9b36;
		font-size: 35.5px;
	}
	.trades svg {
		margin: 0 -6px 0 3px;
	}
	.trades strong.tiny {
		font-size: 28px;
	}
	.promo {
		height: 59px;
		background: #fbf1ea;
		color: #c9622f;
		font-size: 36px;
		line-height: 60px;
		padding-left: 44px;
		position: relative;
		white-space: nowrap;
	}
	.promo i {
		position: absolute;
		right: 0;
		top: 0;
		width: 39px;
		height: 38px;
		padding: 5px 0 0 12px;
		background: #ebe4e0;
		border-bottom-left-radius: 22px;
	}

	.compose {
		height: 145px;
		display: flex;
		padding: 28px 45px 0;
		gap: 36px;
	}
	.round, .input {
		height: 90px;
		border: 2px solid #d6d7dc;
		border-radius: 45px;
		background: #f7f8fa;
		display: flex;
		align-items: center;
	}
	.round {
		width: 90px;
		justify-content: center;
	}
	.input {
		flex: 1;
		overflow: hidden;
		font-size: 41.5px;
		color: #999;
		padding-left: 34px;
	}
	.input > span {
		padding-top: 2px;
	}
	.toggle {
		position: relative;
		margin-left: auto;
		width: 107px;
		height: 90px;
		border-left: 2px solid #d6d7dc;
		background: #fff;
		color: #cf622e;
		font-size: 45px;
		font-weight: 900;
		line-height: 88px;
		padding-left: 26px;
	}
	.toggle svg {
		position: absolute;
		left: 58px;
		top: 49px;
	}

	.assistant {
		height: 121px;
		padding: 30px 37px 0;
		background: linear-gradient(#fdf1ed, #fdf7f4);
		overflow: hidden;
	}
	.card {
		height: 130px;
		border: 3px solid #efc9c1;
		border-radius: 22px;
		background: #fff;
		display: flex;
		align-items: flex-start;
		padding: 12px 20px 0 18px;
		font-size: 41.5px;
		line-height: 88px;
		color: #999;
	}
	.ask {
		width: 128px;
		font-size: 49px;
		font-weight: 900;
		font-style: italic;
		letter-spacing: .5px;
		background: linear-gradient(90deg, #e4592a 50%, #f0a070);
		-webkit-background-clip: text;
		color: transparent;
	}
	.go {
		width: 84px;
		height: 84px;
		border-radius: 50%;
		margin-left: auto;
		background: linear-gradient(60deg, #eb5c28 40%, #efa058);
		display: flex;
		align-items: center;
		justify-content: center;
	}

	footer {
		flex: 1 !important;
		border-top: 2px solid #d6d7dc;
		background: #f7f8fa;
		display: flex;
		padding-left: 41px;
	}
	.index {
		width: 260px;
	}
	.index i {
		display: block;
		width: 0;
		margin: 8px 0 0 87px;
		border: 10px solid transparent;
		border-bottom: 7px solid #666;
		border-top: 0;
	}
	.index strong {
		display: block;
		font-size: 38.5px;
		font-weight: 400;
		line-height: 46px;
		color: #c9443c;
		margin: 11px 0 0 26px;
		letter-spacing: .4px;
	}
	.index p {
		display: flex;
		font-size: 35.5px;
		line-height: 52px;
	}
	.index em {
		color: #c9443c;
		margin-left: 49px;
		font-size: 37px;
		letter-spacing: 1px;
	}
	footer button {
		width: 295px;
		height: 105px;
		margin-top: 14px;
		border: 0;
		border-radius: 53px;
		background: linear-gradient(#ea602b, #f09436);
		color: #fff;
		font-size: 38.5px;
		font-weight: 700;
		padding: 0 3px 3px 0;
	}
	.action {
		width: 149px;
		display: flex;
		flex-direction: column;
		align-items: center;
		padding-top: 9px;
		font-size: 35px;
		line-height: 60px;
		gap: 10px;
	}
	.action svg {
		height: 58px;
	}
	footer button + .action {
		margin-left: 40px;
	}
	.add {
		color: #c9622f;
	}
</style>
